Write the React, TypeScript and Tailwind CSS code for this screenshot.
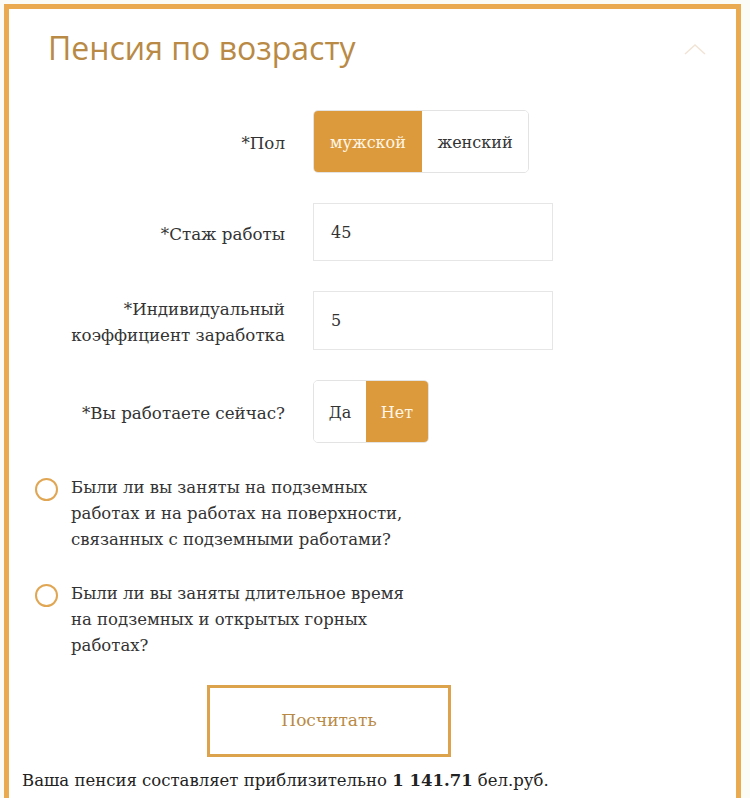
import { useState } from "react";

const serif = { fontFamily: '"DejaVu Serif", "Liberation Serif", serif' };

function Toggle({
  options,
  value,
  onChange,
  widths,
}: {
  options: string[];
  value: string;
  onChange: (v: string) => void;
  widths: string[];
}) {
  return (
    <div className="flex h-[63px] overflow-hidden rounded-[5px] border border-[#e3e3e3]">
      {options.map((o, i) => (
        <button
          key={o}
          type="button"
          onClick={() => onChange(o)}
          className={`${widths[i]} flex items-center justify-center pt-[3px] text-[16px] ${
            value === o ? "bg-[#dc9a3d] text-[#fff6e6]" : "bg-white text-[#333]"
          }`}
        >
          {o}
        </button>
      ))}
    </div>
  );
}

function Row({ label, children }: { label: React.ReactNode; children: React.ReactNode }) {
  return (
    <div className="flex items-center">
      <div className="w-[276px] pt-[3px] text-right text-[16.7px] leading-[26px] text-[#333]">{label}</div>
      <div className="ml-[28px]">{children}</div>
    </div>
  );
}

function Radio({ lines }: { lines: string[] }) {
  return (
    <div className="flex items-start">
      <span className="mt-[3px] h-[23px] w-[23px] shrink-0 rounded-full border-2 border-[#e0a653]" />
      <p className="ml-[13px] text-[16.5px] leading-[26px] text-[#333]">
        {lines.map((l, i) => (
          <span key={i} className="block">
            {l}
          </span>
        ))}
      </p>
    </div>
  );
}

export default function App() {
  const [sex, setSex] = useState("мужской");
  const [works, setWorks] = useState("Нет");
  const [years, setYears] = useState("45");
  const [coef, setCoef] = useState("5");

  return (
    <div className="h-[798px] overflow-hidden bg-[#fbfbf8] pl-[4px] pr-[9px] pt-[4px]" style={serif}>
      <div className="min-h-[820px] border-x-[5px] border-t-[5px] border-[#e9aa50] bg-white">
        {/* ---------- Header ---------- */}
        <div className="flex items-center justify-between pl-[39px] pr-[30px] pt-[15px]">
          <h1
            className="text-[32px] leading-[48px] text-[#b98a45]"
            style={{ fontFamily: '"Open Sans", "Noto Sans", sans-serif' }}
          >
            Пенсия по возрасту
          </h1>
          <svg width="22" height="12" viewBox="0 0 22 12" className="mt-[2px]">
            <path d="M1 11 L11 2 L21 11" fill="none" stroke="#f1e4d6" strokeWidth="1.5" />
          </svg>
        </div>

        {/* ---------- Form ---------- */}
        <div className="mt-[38px] flex flex-col gap-[30px]">
          <Row label="*Пол">
            <Toggle
              options={["мужской", "женский"]}
              value={sex}
              onChange={setSex}
              widths={["w-[108px]", "w-[106px]"]}
            />
          </Row>
          <Row label="*Стаж работы">
            <input
              value={years}
              onChange={(e) => setYears(e.target.value)}
              className="h-[58px] w-[240px] border border-[#e6e6e6] pl-[17px] text-[16px] text-[#333] outline-none"
            />
          </Row>
          <Row
            label={
              <>
                *Индивидуальный
                <br />
                коэффициент заработка
              </>
            }
          >
            <input
              value={coef}
              onChange={(e) => setCoef(e.target.value)}
              className="h-[59px] w-[240px] border border-[#e6e6e6] pl-[17px] text-[16px] text-[#333] outline-none"
            />
          </Row>
          <Row label="*Вы работаете сейчас?">
            <Toggle
              options={["Да", "Нет"]}
              value={works}
              onChange={setWorks}
              widths={["w-[52px]", "w-[62px]"]}
            />
          </Row>
        </div>

        {/* ---------- Conditions ---------- */}
        <div className="ml-[26px] mt-[32px] flex flex-col gap-[28px]">
          <Radio
            lines={[
              "Были ли вы заняты на подземных",
              "работах и на работах на поверхности,",
              "связанных с подземными работами?",
            ]}
          />
          <Radio
            lines={[
              "Были ли вы заняты длительное время",
              "на подземных и открытых горных",
              "работах?",
            ]}
          />
        </div>

        <button
          type="button"
          className="ml-[198px] mt-[26px] flex h-[72px] w-[244px] items-center justify-center border-[3px] border-[#dca24c] text-[17px] text-[#b98a45]"
        >
          Посчитать
        </button>

        <p className="ml-[13px] mt-[12px] text-[16.5px] leading-[24px] text-[#222]">
          Ваша пенсия составляет приблизительно <b>1 141.71</b> бел.руб.
        </p>
      </div>
    </div>
  );
}
